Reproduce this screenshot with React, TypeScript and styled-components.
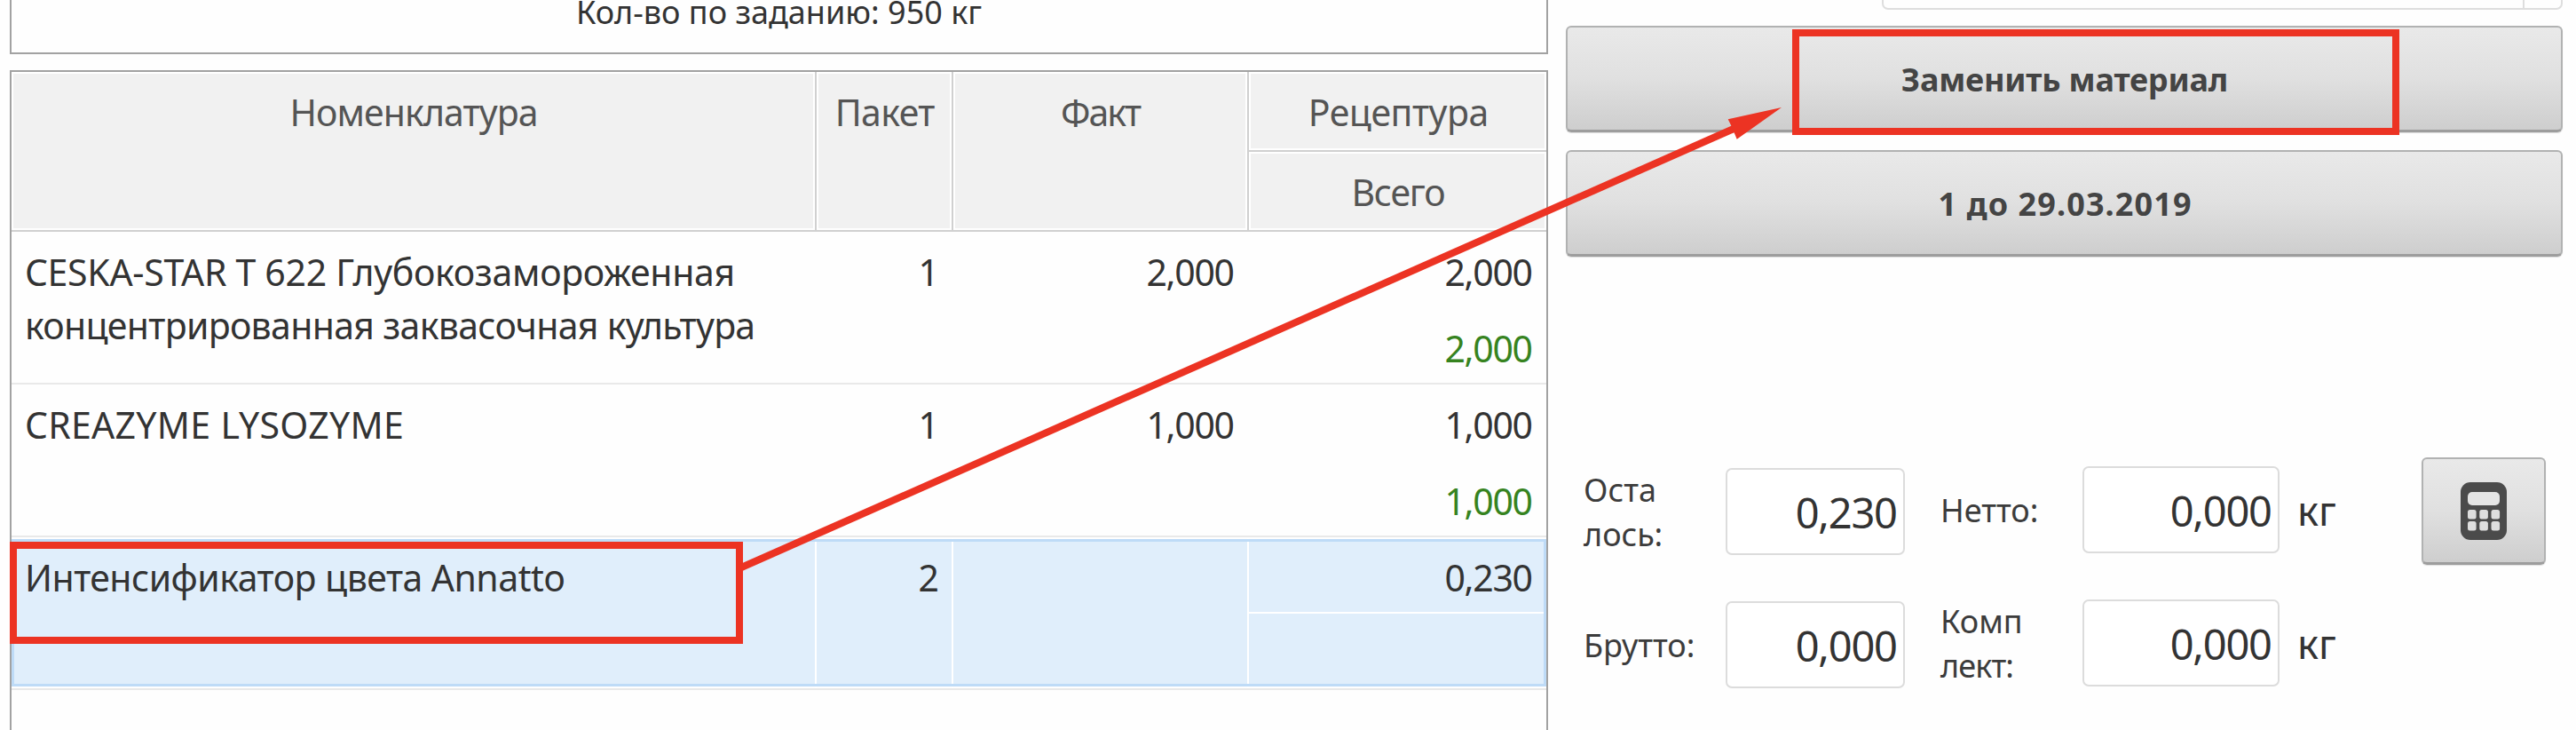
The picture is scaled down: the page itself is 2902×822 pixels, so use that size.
import React from "react";
import styled, { createGlobalStyle, css } from "styled-components";

const GlobalStyle = createGlobalStyle`
  body {
    margin: 0;
    background: #fff;
    font-family: "Noto Sans", "Open Sans", sans-serif;
    color: #333;
  }
  *, *::after { box-sizing: border-box; }
`;

const accent = "#ec3323";
const frame = "#a2a2a2";

const Screen = styled.div`
  position: relative;
  display: flex;
  width: 2902px;
  height: 822px;
  overflow: hidden;
  background: #fefefe;
`;

const LeftColumn = styled.section`
  display: flex;
  flex-direction: column;
  gap: 18px;
  width: 1733px;
  height: 822px;
  margin-left: 11px;
`;

const TaskSummary = styled.div`
  flex: none;
  height: 61px;
  border: 2px solid ${frame};
  border-top: 0;
  text-align: center;
  font-size: 36px;
  line-height: 28px;
  white-space: nowrap;
`;

const Grid = styled.div`
  flex: 1;
  border: 2px solid ${frame};
  border-bottom: 0;
  font-size: 41px;
  line-height: 60px;
  white-space: nowrap;
`;

const columns = css`
  display: grid;
  grid-template-columns: 907px 154px 333px 335px;
`;

const HeaderRow = styled.div`
  ${columns}
  height: 180px;
  grid-template-rows: 90px 90px;
  color: #555;
`;

const HeaderCell = styled.div<{ $span?: boolean; $last?: boolean }>`
  grid-row: ${(p) => (p.$span ? "span 2" : "auto")};
  padding: 15px 0 0 2px;
  text-align: center;
  background: #f1f1f1;
  border-right: ${(p) => (p.$last ? 0 : 2)}px solid #d0d0d0;
  border-bottom: 2px solid #d0d0d0;
  box-shadow: inset 0 0 0 2px #fff;
`;

const Row = styled.div<{ $selected?: boolean }>`
  ${columns}
  height: 172px;
  grid-template-rows: 86px 84px;
  border-bottom: 2px solid #e9e9e9;
  ${(p) =>
    p.$selected &&
    css`
      background: linear-gradient(#e0eefb, #e0eefb) 0 2px / 100% 166px no-repeat;
    `}
`;

const Cell = styled.div<{ $right?: boolean; $span?: boolean; $line?: boolean }>`
  grid-row: ${(p) => (p.$span ? "span 2" : "auto")};
  padding: 15px 14px 0 15px;
  text-align: ${(p) => (p.$right ? "right" : "left")};
  border-right: 2px solid ${(p) => (p.$line ? "#fff" : "transparent")};
  &:nth-child(4), &:nth-child(5) {
    border-right: 0;
    padding-right: 15px;
  }
  &:nth-child(4) { border-bottom: ${(p) => (p.$line ? "2px solid #fff" : "0")}; }
  &:nth-child(5) { grid-column: 4; }
`;

const SelectionFrame = styled.div`
  position: relative;
  &::after {
    content: "";
    position: absolute;
    left: 0;
    right: 0;
    top: 2px;
    height: 166px;
    border: 3px solid #bedbf7;
  }
`;

const Txt = styled.span<{ $ls?: number; $color?: string }>`
  letter-spacing: ${(p) => p.$ls ?? 0}px;
  margin-right: ${(p) => -(p.$ls ?? 0)}px;
  color: ${(p) => p.$color ?? "inherit"};
`;

const RightColumn = styled.section`
  width: 1123px;
  margin-left: 20px;
`;

const Combo = styled.div`
  display: flex;
  justify-content: flex-end;
  width: 767px;
  height: 11px;
  margin-left: 356px;
  border: 2px solid #dedede;
  border-top: 0;
  border-radius: 0 0 7px 7px;
`;

const ComboToggle = styled.div`
  width: 43px;
  border-left: 2px solid #dedede;
`;

const raised = css`
  display: flex;
  align-items: center;
  justify-content: center;
  padding: 0;
  border: 2px solid #b1b2b2;
  border-bottom: 3px solid #9d9d9d;
  border-radius: 6px;
  background: linear-gradient(#e9e9e9, #e0e0e0 50%, #cecece);
  box-shadow: 0 1px 1px #ddd;
  color: #444;
`;

const WideButton = styled.button<{ $gap: number }>`
  ${raised}
  width: 100%;
  height: 120px;
  margin-top: ${(p) => p.$gap}px;
  padding: 3px 0 0 1px;
  font: 700 36px/50px "Noto Sans", sans-serif;
`;

const CalcButton = styled.button`
  ${raised}
  width: 140px;
  height: 121px;
  margin: 226px 0 0 99px;
`;

const Form = styled.div`
  display: flex;
  align-items: flex-start;
`;

const FieldGroup = styled.div<{ $top: number; $cols: string; $left: number }>`
  display: grid;
  grid-template-columns: ${(p) => p.$cols};
  grid-auto-rows: 98px;
  row-gap: 52px;
  align-items: center;
  padding: ${(p) => p.$top}px 0 0 ${(p) => p.$left}px;
`;

const Label = styled.label`
  padding: 2px 0 0 1px;
  font-size: 36px;
  line-height: 50px;
  white-space: nowrap;
  color: #3c3c3c;
`;

const Value = styled.div`
  height: 98px;
  padding-right: 6px;
  border: 2px solid #dcdcdc;
  border-radius: 7px;
  background: #fff;
  text-align: right;
  font-size: 47px;
  line-height: 96px;
`;

const Unit = styled.span`
  padding: 1px 0 0 20px;
  font-size: 45px;
  line-height: 98px;
`;

const Highlight = styled.div<{ $x: number; $y: number; $w: number; $h: number }>`
  position: absolute;
  left: ${(p) => p.$x}px;
  top: ${(p) => p.$y}px;
  width: ${(p) => p.$w}px;
  height: ${(p) => p.$h}px;
  border: 8px solid ${accent};
`;

const Pointer = styled.svg`
  position: absolute;
  left: 0;
  top: 0;
`;

const CalculatorIcon = () => (
  <svg width="52" height="65" viewBox="0 0 52 65">
    <rect width="52" height="65" rx="11" fill="#4b4b4b" />
    <rect x="8" y="11" width="36" height="15" rx="5" fill="#e4e4e4" />
    {[31, 44].map((y) =>
      [8, 21.3, 34.5].map((x) => (
        <rect key={`${x}-${y}`} x={x} y={y} width="9.6" height="10.5" rx="2.5" fill="#dedede" />
      ))
    )}
  </svg>
);

type Item = {
  name: [string, number][];
  pack: string;
  fact: string;
  total: string;
  done: string;
  selected?: boolean;
};

const items: Item[] = [
  {
    name: [
      ["CESKA-STAR T 622 Глубокозамороженная", -0.3],
      ["концентрированная заквасочная культура", -0.68],
    ],
    pack: "1",
    fact: "2,000",
    total: "2,000",
    done: "2,000",
  },
  { name: [["CREAZYME LYSOZYME", 0.3]], pack: "1", fact: "1,000", total: "1,000", done: "1,000" },
  {
    name: [["Интенсификатор цвета Annatto", -0.52]],
    pack: "2",
    fact: "",
    total: "0,230",
    done: "",
    selected: true,
  },
];

const ItemRow = ({ item }: { item: Item }) => {
  const s = item.selected;
  return (
    <Row $selected={s}>
      <Cell $span $line={s}>
        {item.name.map(([t, ls]) => (
          <div key={t}>
            <Txt $ls={ls}>{t}</Txt>
          </div>
        ))}
      </Cell>
      <Cell $span $right $line={s}>{item.pack}</Cell>
      <Cell $span $right $line={s}>
        <Txt $ls={-1.3}>{item.fact}</Txt>
      </Cell>
      <Cell $right $line={s}>
        <Txt $ls={-1.3}>{item.total}</Txt>
      </Cell>
      <Cell $right>
        <Txt $ls={-1.3} $color="#36831f">{item.done}</Txt>
      </Cell>
    </Row>
  );
};

export default function App() {
  return (
    <Screen>
      <GlobalStyle />
      <LeftColumn>
        <TaskSummary>Кол-во по заданию: 950 кг</TaskSummary>
        <Grid>
          <HeaderRow>
            <HeaderCell $span><Txt $ls={-0.9}>Номенклатура</Txt></HeaderCell>
            <HeaderCell $span><Txt $ls={-0.6}>Пакет</Txt></HeaderCell>
            <HeaderCell $span><Txt $ls={-2}>Факт</Txt></HeaderCell>
            <HeaderCell $last><Txt $ls={-0.45}>Рецептура</Txt></HeaderCell>
            <HeaderCell $last><Txt $ls={-1.2}>Всего</Txt></HeaderCell>
          </HeaderRow>
          {items.map((item) =>
            item.selected ? (
              <SelectionFrame key={item.name[0][0]}>
                <ItemRow item={item} />
              </SelectionFrame>
            ) : (
              <ItemRow key={item.name[0][0]} item={item} />
            )
          )}
        </Grid>
      </LeftColumn>

      <RightColumn>
        <Combo>
          <ComboToggle />
        </Combo>
        <WideButton $gap={18}><Txt $ls={-0.2}>Заменить материал</Txt></WideButton>
        <WideButton $gap={20}><Txt $ls={1.1}>1 до 29.03.2019</Txt></WideButton>
        <Form>
          <FieldGroup $top={238} $left={19} $cols="161px 202px">
            <Label>Оста<br />лось:</Label>
            <Value><Txt $ls={-1.2}>0,230</Txt></Value>
            <Label>Брутто:</Label>
            <Value><Txt $ls={-1.2}>0,000</Txt></Value>
          </FieldGroup>
          <FieldGroup $top={236} $left={39} $cols="161px 222px 61px">
            <Label>Нетто:</Label>
            <Value><Txt $ls={-1.2}>0,000</Txt></Value>
            <Unit>кг</Unit>
            <Label>Комп<br /><Txt $ls={-0.9}>лект:</Txt></Label>
            <Value><Txt $ls={-1.2}>0,000</Txt></Value>
            <Unit>кг</Unit>
          </FieldGroup>
          <CalcButton aria-label="Калькулятор">
            <CalculatorIcon />
          </CalcButton>
        </Form>
      </RightColumn>

      <Highlight $x={2019} $y={33} $w={684} $h={119} />
      <Highlight $x={11} $y={610} $w={826} $h={115} />
      <Pointer width="2902" height="822" viewBox="0 0 2902 822">
        <path d="M834 639.5L1953 145" stroke={accent} strokeWidth="8" fill="none" />
        <path d="M2007 121L1946.7 134.3L1950.5 142L1953.5 149L1956.7 156.7Z" fill={accent} />
      </Pointer>
    </Screen>
  );
}
